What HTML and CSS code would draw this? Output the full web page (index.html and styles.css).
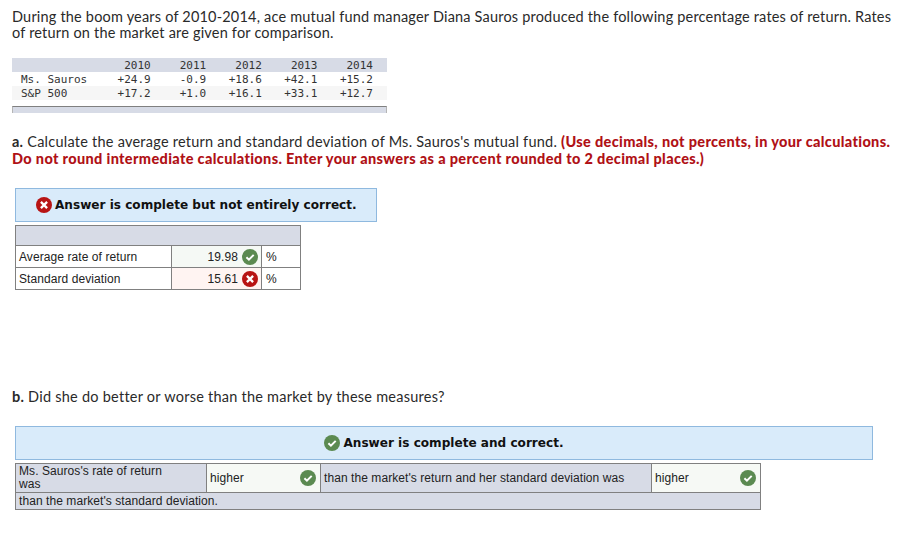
FILE: index.html
```html
<!DOCTYPE html>
<html lang="en">
<head>
<meta charset="utf-8">
<title>Mutual fund question</title>
<link rel="stylesheet" href="styles.css">
</head>
<body>
<svg class="defs" width="0" height="0" aria-hidden="true">
  <symbol id="ok" viewBox="0 0 16 16">
    <circle cx="8" cy="8" r="8" fill="#5b8a51"/>
    <path d="M4.4 8.3l2.5 2.4 4.8-4.8" fill="none" stroke="#fff" stroke-width="2"/>
  </symbol>
  <symbol id="bad" viewBox="0 0 16 16">
    <circle cx="8" cy="8" r="8" fill="#b81414"/>
    <path d="M4.9 4.9l6.2 6.2M11.1 4.9l-6.2 6.2" fill="none" stroke="#fff" stroke-width="2.3"/>
  </symbol>
</svg>

<p class="para intro">During the boom years of 2010-2014, ace mutual fund manager Diana Sauros produced the following percentage rates of return. Rates of return on the market are given for comparison.</p>

<table class="data">
  <tr class="shade"><td class="name"></td><td>2010</td><td>2011</td><td>2012</td><td>2013</td><td>2014</td></tr>
  <tr><td class="name">Ms. Sauros</td><td>+24.9</td><td>-0.9</td><td>+18.6</td><td>+42.1</td><td>+15.2</td></tr>
  <tr class="light"><td class="name">S&amp;P 500</td><td>+17.2</td><td>+1.0</td><td>+16.1</td><td>+33.1</td><td>+12.7</td></tr>
</table>
<div class="rule"></div>

<p class="para part-a"><b>a.</b> Calculate the average return and standard deviation of Ms. Sauros's mutual fund. <strong class="warn">(Use decimals, not percents, in your calculations. Do not round intermediate calculations. Enter your answers as a percent rounded to 2 decimal places.)</strong></p>

<div class="banner banner-a"><svg class="icon"><use href="#bad"/></svg><span>Answer is complete but not entirely correct.</span></div>

<table class="grid grid-a">
  <colgroup><col class="col-label"><col class="col-val"><col class="col-unit"></colgroup>
  <tr class="head"><td colspan="3"></td></tr>
  <tr>
    <td class="label">Average rate of return</td>
    <td class="val good"><span>19.98</span><svg class="icon"><use href="#ok"/></svg></td>
    <td class="unit">%</td>
  </tr>
  <tr>
    <td class="label">Standard deviation</td>
    <td class="val wrong"><span>15.61</span><svg class="icon"><use href="#bad"/></svg></td>
    <td class="unit">%</td>
  </tr>
</table>

<p class="para part-b"><b>b.</b> Did she do better or worse than the market by these measures?</p>

<div class="banner banner-b"><svg class="icon"><use href="#ok"/></svg><span>Answer is complete and correct.</span></div>

<table class="grid grid-b">
  <tr class="top">
    <td class="fill c1">Ms. Sauros's rate of return was</td>
    <td class="pick c2"><div class="pick-in"><span>higher</span><svg class="icon"><use href="#ok"/></svg></div></td>
    <td class="fill c3">than the market's return and her standard deviation was</td>
    <td class="pick c4"><div class="pick-in"><span>higher</span><svg class="icon"><use href="#ok"/></svg></div></td>
  </tr>
  <tr class="bottom"><td class="fill" colspan="4">than the market's standard deviation.</td></tr>
</table>
</body>
</html>
```

FILE: styles.css
```css
* { box-sizing: border-box; }
html, body { margin: 0; padding: 0; }
body {
  width: 922px;
  height: 558px;
  overflow: hidden;
  background: #fff;
  padding: 9px 0 0 12px;
  font-family: "Lato", "Liberation Sans", sans-serif;
  color: #2a2a2a;
}
.defs { position: absolute; }
.para {
  margin: 0;
  width: 884px;
  font-size: 14.5px;
  line-height: 17px;
  letter-spacing: 0.24px;
}
.intro { line-height: 16px; letter-spacing: 0.19px; }
.para b { font-weight: 700; }
.warn { color: #b01116; font-weight: 900; letter-spacing: 0.35px; }

.data {
  border-collapse: collapse;
  table-layout: fixed;
  width: 375px;
  margin-top: 17px;
  font-family: "DejaVu Sans Mono", monospace;
  font-size: 11px;
  color: #333;
}
.data td {
  height: 14px;
  padding: 1px 14px 0 0;
  line-height: 13px;
  text-align: right;
  width: 55.5px;
}
.data td.name { width: 97px; padding: 1px 0 0 9px; text-align: left; }
.shade { background: #d7dbe6; }
.light { background: #f6f6f6; }
.rule {
  width: 375px;
  height: 7px;
  margin-top: 6px;
  background: #d7dbe6;
  border-top: 1px solid #808080;
  border-left: 1px solid #b5b5b5;
  border-right: 1px solid #b5b5b5;
}
.part-a { margin-top: 20px; }

.banner {
  display: flex;
  align-items: center;
  height: 34px;
  margin-left: 3px;
  background: #d9ebfa;
  border: 1px solid #8fb9df;
  font-family: "DejaVu Sans", sans-serif;
  font-weight: 700;
  font-size: 12.08px;
  color: #111;
  gap: 3px;
  white-space: nowrap;
}
.banner-a { width: 362px; margin-top: 21px; padding-left: 20px; }
.banner-b { width: 858px; margin-top: 21px; justify-content: center; }
.icon { width: 16px; height: 16px; flex: none; display: block; }

.grid {
  border-collapse: collapse;
  table-layout: fixed;
  margin-left: 3px;
  font-family: "Liberation Sans", sans-serif;
  font-size: 12px;
  color: #222;
}
.grid td { border: 1px solid #808080; padding: 0; }
.grid-a { width: 285px; margin-top: 3px; letter-spacing: 0.08px; }
.col-label { width: 156px; }
.col-val { width: 90px; }
.col-unit { width: 39px; }
.grid-a td { height: 22px; }
.grid-a .head td { height: 20px; background: #d7dbe6; }
.grid td.label { padding-left: 3px; }
.grid td.val { text-align: right; padding-right: 3px; }
.val span { vertical-align: middle; }
.val .icon { display: inline-block; vertical-align: middle; margin: 0 0 0 4px; }
.good { background: #f5f9f5; }
.wrong { background: #fff4f2; }
.grid td.unit { padding-left: 4px; }
.part-b { margin-top: 98px; }
.grid-b { width: 745px; margin-top: 3px; line-height: 13px; letter-spacing: 0.07px; }
.grid td.fill { background: #d7dbe6; padding-left: 3px; }
.top td { height: 29px; }
.bottom td { height: 17px; }
.grid td.c1 { width: 191px; padding-right: 40px; }
.c2 { width: 114px; }
.c3 { width: 331px; }
.c4 { width: 109px; }
.pick { background: #f6f9f5; }
.pick-in { display: flex; align-items: center; justify-content: space-between; padding: 0 4px 0 3px; }
```
